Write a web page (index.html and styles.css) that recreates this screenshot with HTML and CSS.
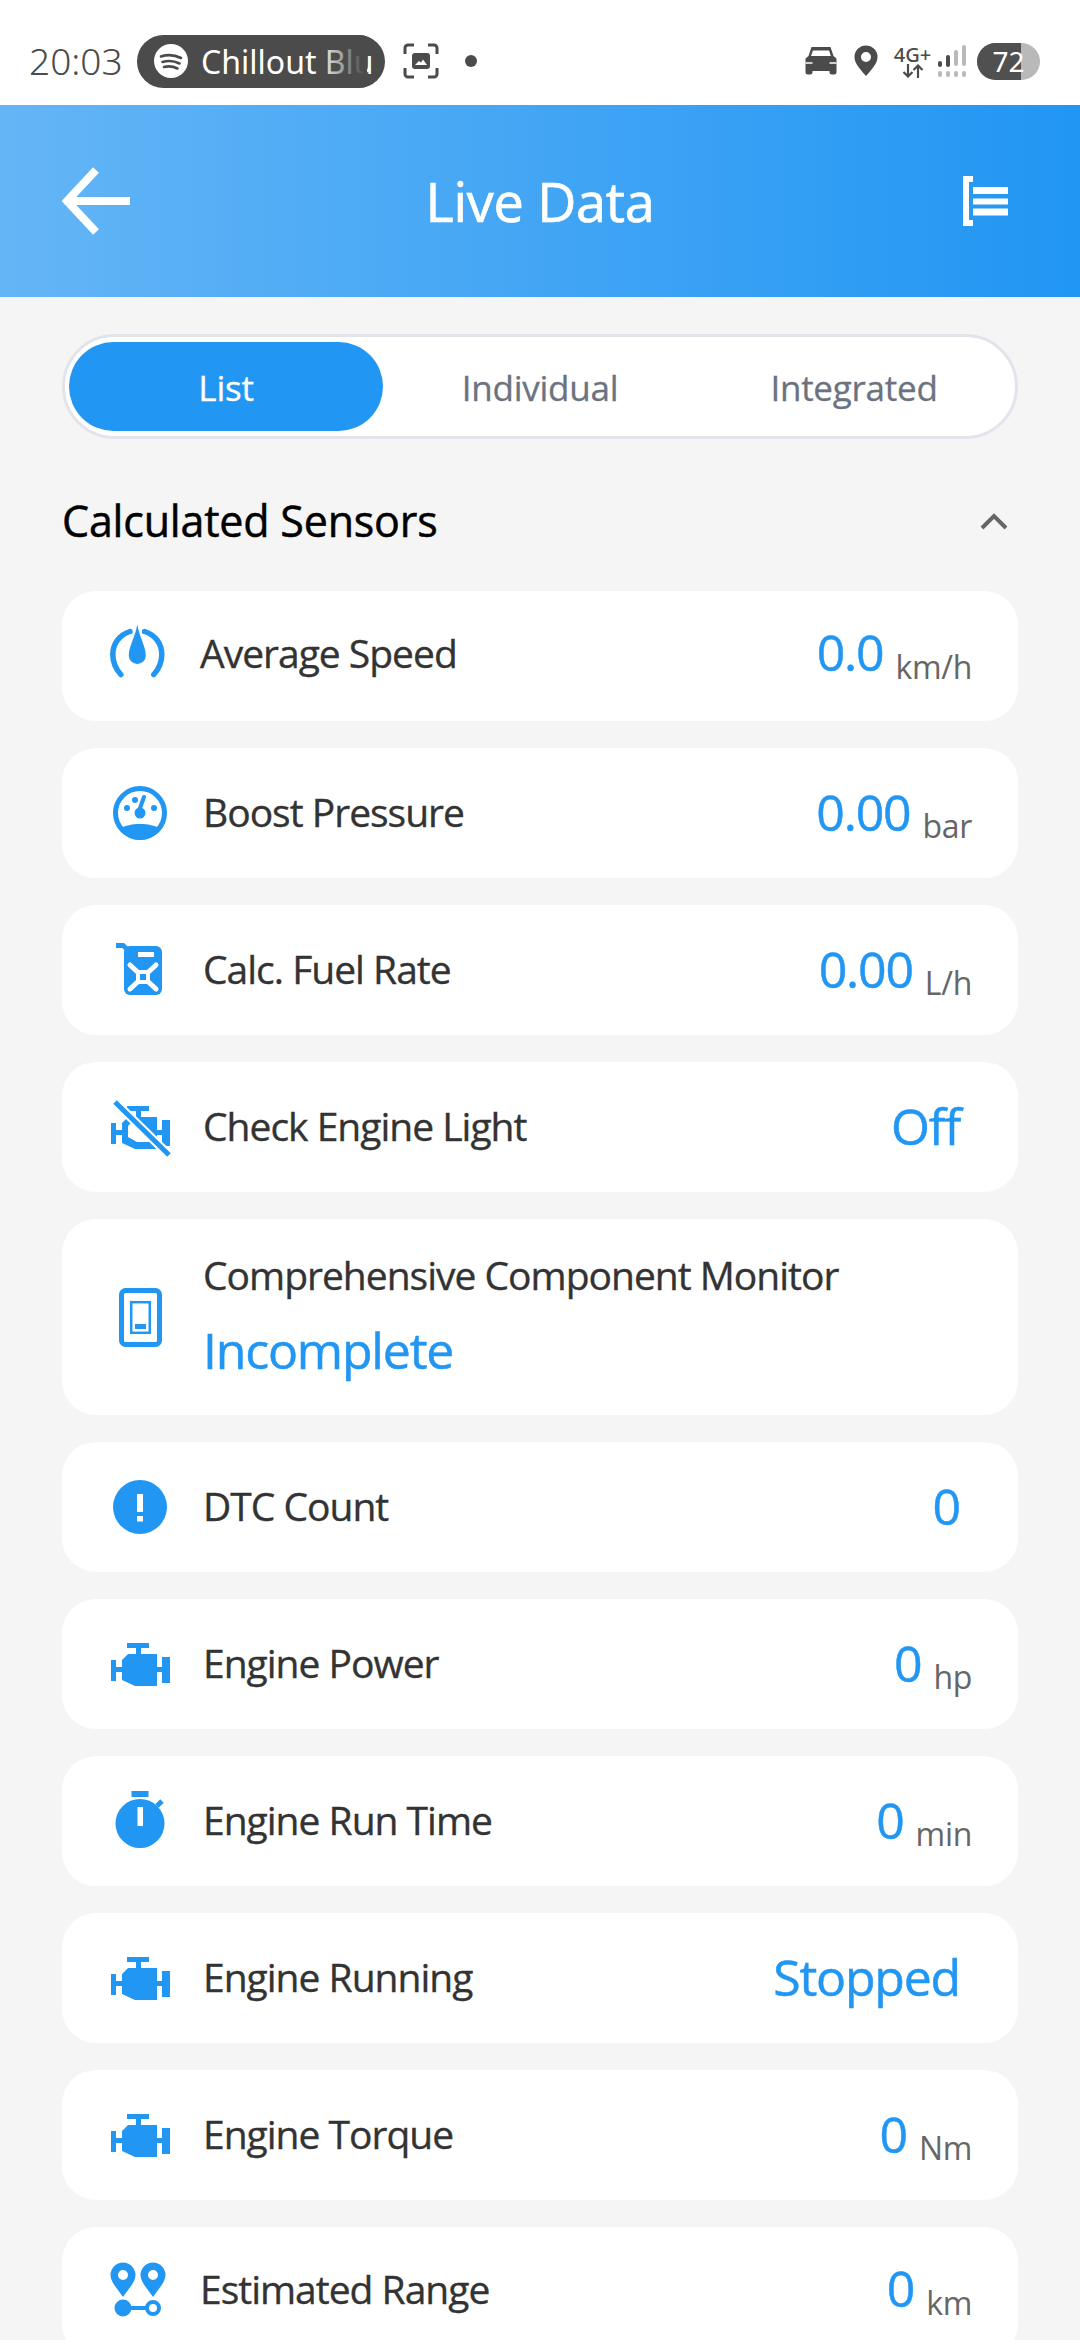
FILE: index.html
```html
<!DOCTYPE html>
<html lang="en">
<head>
<meta charset="utf-8">
<title>Live Data</title>
<link rel="stylesheet" href="styles.css">
</head>
<body>
<div class="screen">
  <div class="status">
    <span class="time">20:03</span>
    <div class="media">
      <svg class="spotify" viewBox="0 0 34 34"><circle cx="17" cy="17" r="17" fill="#fff"/><path d="M7 12.500c6-2 14-1.500 20 1.500M8.500 18c5-1.500 12-1 17 1.500M10 23c4-1 9-.7 13.500 1.500" fill="none" stroke="#4a4b4a" stroke-width="2.600" stroke-linecap="round"/></svg>
      <span class="media-title">Chillout Blu</span>
    </div>
    <svg class="shot" viewBox="0 0 36 36"><path d="M2 11V5a3 3 0 0 1 3-3h6M25 2h6a3 3 0 0 1 3 3v6M34 25v6a3 3 0 0 1-3 3h-6M11 34H5a3 3 0 0 1-3-3v-6" fill="none" stroke="#4a4b4a" stroke-width="3"/><rect x="9" y="10" width="18" height="16" rx="3" fill="#4a4b4a"/><path d="M12 22l4-4 2 1.500 2-3 4 5.500z" fill="#fff"/></svg>
    <span class="dot"></span>
    <div class="status-right">
      <svg class="car" viewBox="0 0 33 30"><path d="M7 1h19l3 9 3 2.500V26a2.500 2.500 0 0 1-2.500 2.500h-2A2.500 2.500 0 0 1 25 26v-1H8v1a2.500 2.500 0 0 1-2.500 2.500h-2A2.500 2.500 0 0 1 1 26V12.500L4 10z" fill="#4a4b4a"/><path d="M8.500 4.500h16l1.800 5.500H6.500z" fill="#fff"/><path d="M1 17h7M25 17h7" stroke="#fff" stroke-width="1.500"/></svg>
      <svg class="pin" viewBox="0 0 24 32"><path fill-rule="evenodd" d="M12 31C5 23 .5 18 .5 12a11.500 11.500 0 0 1 23 0c0 6-4.500 11-11.500 19zM12 7a5 5 0 1 0 0 10 5 5 0 0 0 0-10z" fill="#4a4b4a"/></svg>
      <div class="net">
        <span class="net-label">4G+</span>
        <svg class="net-arrows" viewBox="0 0 22 14"><path d="M6 0v12M1.500 8L6 12.500 10.500 8M16 14V2M11.500 6L16 1.500 20.500 6" fill="none" stroke="#4a4b4a" stroke-width="2.200"/></svg>
      </div>
      <svg class="signal" viewBox="0 0 28 32"><g fill="#b9b9b9"><rect x="24" y="0" width="4" height="21" rx="2"/><rect x="16" y="5" width="4" height="16" rx="2"/><rect x="0" y="26" width="4" height="6" rx="2"/><rect x="8" y="26" width="4" height="6" rx="2"/><rect x="16" y="26" width="4" height="6" rx="2"/><rect x="24" y="26" width="4" height="6" rx="2"/></g><g fill="#4a4b4a"><rect x="0" y="16" width="4" height="6" rx="2"/><rect x="8" y="10" width="4" height="12" rx="2"/></g></svg>
      <div class="battery"><span class="battery-fill"></span><span class="battery-num">72</span></div>
    </div>
  </div>

  <header class="bar">
    <svg class="back" viewBox="0 0 68 70"><path d="M34 4L5 35l29 31M5 35h63" fill="none" stroke="#fff" stroke-width="8"/></svg>
    <h1 class="bar-title">Live Data</h1>
    <svg class="menu" viewBox="0 0 46 50"><path d="M10 3H3v44h7" fill="none" stroke="#fff" stroke-width="6"/><path d="M10 11h35v7H10zM10 22.500h35v6H10zM10 32.500h35v7H10z" fill="#fff"/></svg>
  </header>

  <main class="content">
    <div class="tabs">
      <span class="tab tab--active">List</span>
      <span class="tab">Individual</span>
      <span class="tab">Integrated</span>
    </div>

    <div class="section-head">
      <h2 class="section-title">Calculated Sensors</h2>
      <svg class="chevron" viewBox="0 0 28 18"><path d="M2 16L14 4l12 12" fill="none" stroke="#666" stroke-width="4"/></svg>
    </div>

    <div class="list">
      <div class="row row--narrow">
        <svg class="icon" viewBox="0 0 60 60"><path d="M27.300-1.500c2 12 8.500 22 8.500 31a8.500 8.500 0 0 1-17 0c0-9 6.500-19 8.500-31z" fill="#2196f3"/><path d="M20 5.500C9 9 2.800 18 2.800 28.500c0 7.500 3 14.500 8 20M34.600 5.500c11 3.500 17.200 12.500 17.200 23 0 7.500-3 14.500-8 20" fill="none" stroke="#2196f3" stroke-width="5.500" stroke-linecap="round"/></svg>
        <span class="label">Average Speed</span>
        <span class="value">0.0</span><span class="unit">km/h</span>
      </div>
      <div class="row">
        <svg class="icon" viewBox="0 0 60 60"><circle cx="30" cy="30" r="24.500" fill="none" stroke="#2196f3" stroke-width="5"/><path d="M9 46c5-3 12-5 21-5s16 2 21 5c-5 7-13 11-21 11S14 53 9 46z" fill="#2196f3"/><circle cx="17" cy="25" r="3" fill="#2196f3"/><circle cx="25" cy="17" r="3" fill="#2196f3"/><circle cx="44" cy="25" r="3" fill="#2196f3"/><circle cx="30" cy="30" r="5.500" fill="#2196f3"/><path d="M29 28l5-14" stroke="#2196f3" stroke-width="4" stroke-linecap="round"/></svg>
        <span class="label">Boost Pressure</span>
        <span class="value">0.00</span><span class="unit">bar</span>
      </div>
      <div class="row">
        <svg class="icon" viewBox="0 0 60 60"><path d="M6 5.500h7l9 8" fill="none" stroke="#2196f3" stroke-width="5"/><rect x="14" y="6" width="38" height="49" rx="6" fill="#2196f3"/><rect x="28" y="12" width="16" height="5" fill="#fff"/><path d="M20 25l26 24M46 25L20 49" stroke="#fff" stroke-width="5" stroke-linecap="round"/><rect x="26" y="30" width="14" height="14" fill="#fff"/><rect x="30" y="34" width="6" height="6" fill="#2196f3"/></svg>
        <span class="label">Calc. Fuel Rate</span>
        <span class="value">0.00</span><span class="unit">L/h</span>
      </div>
      <div class="row row--plain">
        <svg class="icon" viewBox="0 0 60 60"><path d="M17 9H39V14H31V20H47V33H52V23H60V49H52V38H47V52H25L12 46V38H6V47H1V26H6V33H12V26L18 20H26V14H17Z" fill="#2196f3"/><path d="M18 29l4-4h2l19 19v1H27l-9-5z" fill="#fff"/><path d="M5 5l54 53" stroke="#fff" stroke-width="9"/><path d="M5 5l54 53" stroke="#2196f3" stroke-width="5"/></svg>
        <span class="label">Check Engine Light</span>
        <span class="value">Off</span>
      </div>
      <div class="row row--tall">
        <svg class="icon" viewBox="0 0 60 60"><rect x="11.500" y="3.500" width="38" height="54" rx="4" fill="none" stroke="#2196f3" stroke-width="5"/><rect x="21.200" y="15.200" width="18.600" height="30.600" fill="none" stroke="#2196f3" stroke-width="2.500"/><rect x="25" y="37" width="11" height="5" fill="#2196f3"/></svg>
        <div class="stack">
          <span class="label">Comprehensive Component Monitor</span>
          <span class="value value--big">Incomplete</span>
        </div>
      </div>
      <div class="row row--plain">
        <svg class="icon" viewBox="0 0 60 60"><circle cx="30" cy="30" r="27" fill="#2196f3"/><rect x="27" y="17" width="6" height="18" fill="#fff"/><rect x="27" y="39" width="6" height="5.500" fill="#fff"/></svg>
        <span class="label">DTC Count</span>
        <span class="value">0</span>
      </div>
      <div class="row">
        <svg class="icon" viewBox="0 0 60 60"><path d="M17 9H39V14H31V20H47V33H52V23H60V49H52V38H47V52H25L12 46V38H6V47H1V26H6V33H12V26L18 20H26V14H17Z" fill="#2196f3"/></svg>
        <span class="label">Engine Power</span>
        <span class="value">0</span><span class="unit">hp</span>
      </div>
      <div class="row">
        <svg class="icon" viewBox="0 0 60 60"><circle cx="30" cy="32.500" r="24.500" fill="#2196f3"/><rect x="21.500" y="0" width="17" height="6" fill="#2196f3"/><path d="M47 15l5-5" stroke="#2196f3" stroke-width="5"/><rect x="27.500" y="16" width="5.500" height="19" fill="#fff"/></svg>
        <span class="label">Engine Run Time</span>
        <span class="value">0</span><span class="unit">min</span>
      </div>
      <div class="row row--plain">
        <svg class="icon" viewBox="0 0 60 60"><path d="M17 9H39V14H31V20H47V33H52V23H60V49H52V38H47V52H25L12 46V38H6V47H1V26H6V33H12V26L18 20H26V14H17Z" fill="#2196f3"/></svg>
        <span class="label">Engine Running</span>
        <span class="value">Stopped</span>
      </div>
      <div class="row">
        <svg class="icon" viewBox="0 0 60 60"><path d="M17 9H39V14H31V20H47V33H52V23H60V49H52V38H47V52H25L12 46V38H6V47H1V26H6V33H12V26L18 20H26V14H17Z" fill="#2196f3"/></svg>
        <span class="label">Engine Torque</span>
        <span class="value">0</span><span class="unit">Nm</span>
      </div>
      <div class="row row--narrow">
        <svg class="icon" viewBox="0 0 60 60"><g fill="#2196f3"><path fill-rule="evenodd" d="M13 35C7 26 .500 20 .500 13a12.500 12.500 0 0 1 25 0c0 7-6.500 13-12.500 22zM13 8a5 5 0 1 0 0 10 5 5 0 0 0 0-10z"/><path fill-rule="evenodd" d="M43 35c-6-9-12.500-15-12.500-22a12.500 12.500 0 0 1 25 0c0 7-6.500 13-12.500 22zM43 8a5 5 0 1 0 0 10 5 5 0 0 0 0-10z"/><circle cx="13" cy="46" r="8.500"/></g><circle cx="43" cy="46" r="6" fill="#fff" stroke="#2196f3" stroke-width="4"/><path d="M20 46h17" stroke="#2196f3" stroke-width="4"/></svg>
        <span class="label">Estimated Range</span>
        <span class="value">0</span><span class="unit">km</span>
      </div>
    </div>
  </main>
</div>
</body>
</html>
```

FILE: styles.css
```css
* { box-sizing: border-box; }
html, body { margin: 0; padding: 0; }
body { width: 1080px; height: 2340px; overflow: hidden; background: #f5f5f5; font-family: "Open Sans", "Noto Sans", sans-serif; }
.screen { width: 1080px; height: 2340px; overflow: hidden; display: flex; flex-direction: column; }

.status { height: 105px; flex: none; background: #fff; display: flex; align-items: center; padding: 17px 40px 0 29px; }
.time { font-family: "Noto Sans", sans-serif; font-weight: 300; font-size: 37px; color: #4a4b4a; width: 108px; flex: none; position: relative; top: -1px; }
.media { width: 248px; height: 53px; flex: none; border-radius: 27px; background: #4a4b4a; display: flex; align-items: center; padding-left: 17px; gap: 13px; position: relative; overflow: hidden; }
.media::after { content: ""; position: absolute; top: 0; bottom: 0; left: 180px; width: 50px; background: linear-gradient(90deg, rgba(74,75,74,0), #4a4b4a 95%); }
.spotify { width: 34px; height: 34px; flex: none; }
.media-title { font-family: "Noto Sans", sans-serif; font-size: 32px; color: #fff; white-space: nowrap; }
.shot { width: 36px; height: 36px; flex: none; margin-left: 18px; }
.dot { width: 12px; height: 12px; border-radius: 50%; background: #4a4b4a; flex: none; margin-left: 26px; }
.status-right { margin-left: auto; display: flex; align-items: center; }
.car { width: 34px; height: 30px; flex: none; }
.pin { width: 24px; height: 32px; flex: none; margin-left: 16px; }
.net { width: 39px; margin-left: 15px; display: flex; flex-direction: column; align-items: center; flex: none; }
.net-label { font-family: "Noto Sans", sans-serif; font-weight: 500; font-size: 20px; line-height: 19px; color: #4a4b4a; }
.net-arrows { width: 22px; height: 14px; }
.signal { width: 28px; height: 32px; flex: none; margin-left: 6px; }
.battery { width: 63px; height: 37px; flex: none; margin-left: 11px; border-radius: 19px; background: #b9b9b9; position: relative; overflow: hidden; display: flex; align-items: center; justify-content: center; }
.battery-fill { position: absolute; left: 0; top: 0; bottom: 0; width: 44px; background: #505050; }
.battery-num { position: relative; font-family: "Noto Sans", sans-serif; font-size: 28px; color: #fff; }

.bar { height: 192px; flex: none; background: linear-gradient(90deg, #64b5f6, #2196f3); display: flex; align-items: center; justify-content: space-between; padding: 0 71px 0 62px; position: relative; }
.back { width: 68px; height: 70px; }
.bar-title { margin: 0; position: absolute; left: 0; right: 0; text-align: center; font-size: 54px; font-weight: 400; -webkit-text-stroke: 0.7px #fff; letter-spacing: -0.3px; color: #fff; line-height: 1; pointer-events: none; }
.menu { width: 46px; height: 50px; }

.content { padding: 37px 62px 0; }
.tabs { height: 105px; border: 3px solid #e1e4eb; border-radius: 53px; background: #fff; padding: 5px 4px; display: grid; grid-template-columns: repeat(3, 1fr); }
.tab { display: flex; align-items: center; justify-content: center; padding-top: 1px; border-radius: 47px; font-size: 35px; letter-spacing: -0.25px; -webkit-text-stroke: 0.3px currentColor; color: #6b7280; }
.tab--active { background: #2196f3; color: #fff; }

.section-head { height: 152px; display: flex; align-items: center; justify-content: space-between; padding: 11px 10px 0 0; }
.section-title { margin: 0; font-size: 43px; font-weight: 400; -webkit-text-stroke: 0.5px #000; letter-spacing: -0.2px; color: #000; }
.chevron { width: 28px; height: 18px; }

.list { display: flex; flex-direction: column; gap: 27px; }
.row { height: 130px; flex: none; background: #fff; border-radius: 34px; display: flex; align-items: center; padding: 0 46px 0 48px; }
.row--plain { padding-right: 58px; }
.row--tall { height: 196px; }
.row--narrow .label { margin-left: 30px; margin-bottom: 7px; }
.row--narrow .value { margin-bottom: 8px; }
.row--narrow .unit { margin-top: 21px; }
.icon { width: 60px; height: 60px; flex: none; overflow: visible; }
.label { margin-left: 33px; margin-bottom: 3px; font-size: 39px; letter-spacing: -1px; -webkit-text-stroke: 0.35px #333; color: #333; white-space: nowrap; margin-right: auto; }
.value { font-size: 50px; letter-spacing: -1.2px; -webkit-text-stroke: 0.5px #2196f3; color: #2196f3; line-height: 1; margin-bottom: 2px; }
.unit { font-size: 32px; letter-spacing: -0.3px; color: #666; margin-left: 12px; margin-top: 25px; line-height: 1; }
.stack { display: flex; flex-direction: column; gap: 24px; margin-bottom: 10px; }
.stack .label { margin-right: 0; margin-bottom: 0; line-height: 52px; }
.value--big { margin-left: 33px; margin-bottom: 0; }
```
